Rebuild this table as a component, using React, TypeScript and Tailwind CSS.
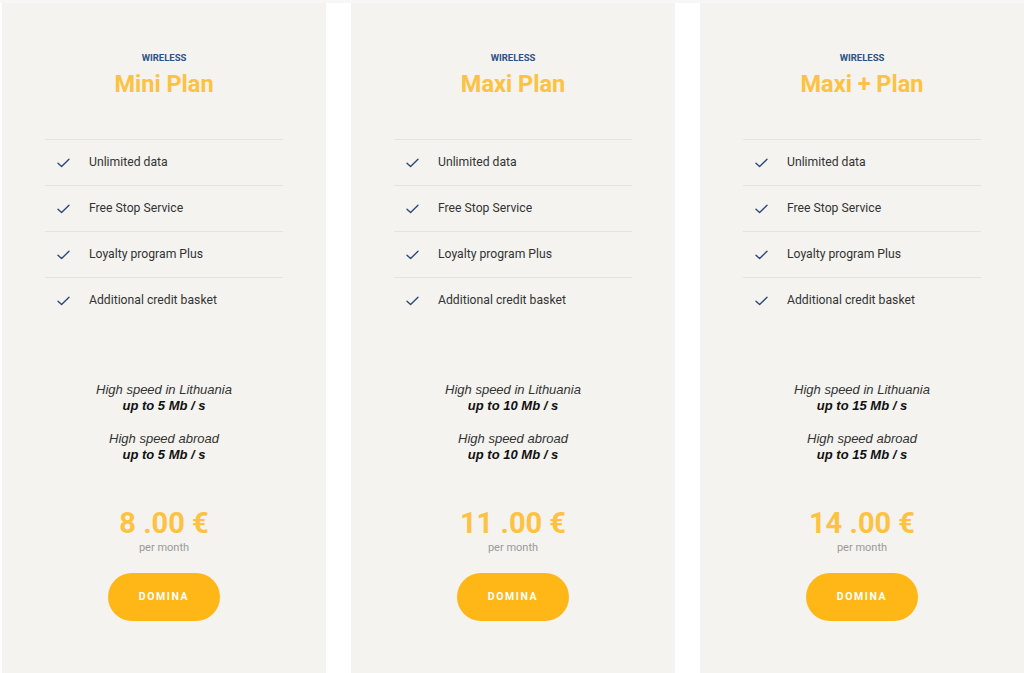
const plans = [
  { name: 'Mini Plan', speed: '5', price: '8' },
  { name: 'Maxi Plan', speed: '10', price: '11' },
  { name: 'Maxi + Plan', speed: '15', price: '14' },
]

const features = [
  'Unlimited data',
  'Free Stop Service',
  'Loyalty program Plus',
  'Additional credit basket',
]

function Check() {
  return (
    <svg width="13" height="10" viewBox="0 0 13 10" fill="none" aria-hidden="true">
      <path d="M1 5.2 L4.6 8.6 L12 1.2" stroke="#2d4a78" strokeWidth="1.4" strokeLinecap="round" strokeLinejoin="round" />
    </svg>
  )
}

function PlanCard({ plan }: { plan: (typeof plans)[number] }) {
  return (
    <div className="w-[324px] h-[670px] shrink-0 bg-[#f4f3f0] flex flex-col items-center pt-[49px]">
      <div className="text-[9.5px] leading-[12px] font-bold text-[#2b5189] uppercase">Wireless</div>
      <h2 className="mt-[5px] text-[23.5px] leading-[30px] font-bold text-[#fdc241]">{plan.name}</h2>

      <ul className="mt-[40px] w-[238px]">
        {features.map((f) => (
          <li key={f} className="h-[46px] flex items-center border-t border-[#e4e3df]">
            <span className="w-[44px] pl-[12px] flex items-center">
              <Check />
            </span>
            <span className="text-[12.2px] text-[#333]">{f}</span>
          </li>
        ))}
      </ul>

      <div
        className="mt-[59px] text-center text-[13px] leading-[16px] text-[#333] italic"
        style={{ fontFamily: '"Liberation Sans", Arial, sans-serif' }}
      >
        <p>High speed in Lithuania</p>
        <p className="font-bold text-[#111]">up to {plan.speed} Mb / s</p>
        <p className="mt-[17px]">High speed abroad</p>
        <p className="font-bold text-[#111]">up to {plan.speed} Mb / s</p>
      </div>

      <div className="mt-[44px] text-[29px] leading-[33px] font-bold text-[#fdc241]">{plan.price} .00 €</div>
      <div className="mt-[1px] text-[11px] leading-[14px] text-[#999]">per month</div>

      <button className="mt-[18px] w-[112px] h-[48px] rounded-full bg-[#ffb718] text-white text-[10.5px] font-bold tracking-[1.6px]">
        DOMINA
      </button>
    </div>
  )
}

export default function App() {
  return (
    <div className="w-[1024px] h-[673px] overflow-hidden bg-white border-t-[3px] border-[#f7f7f7] pl-[2px] flex gap-[25px]" style={{ fontFamily: 'Roboto, "Noto Sans", sans-serif' }}>
      {plans.map((p) => (
        <PlanCard key={p.name} plan={p} />
      ))}
    </div>
  )
}
